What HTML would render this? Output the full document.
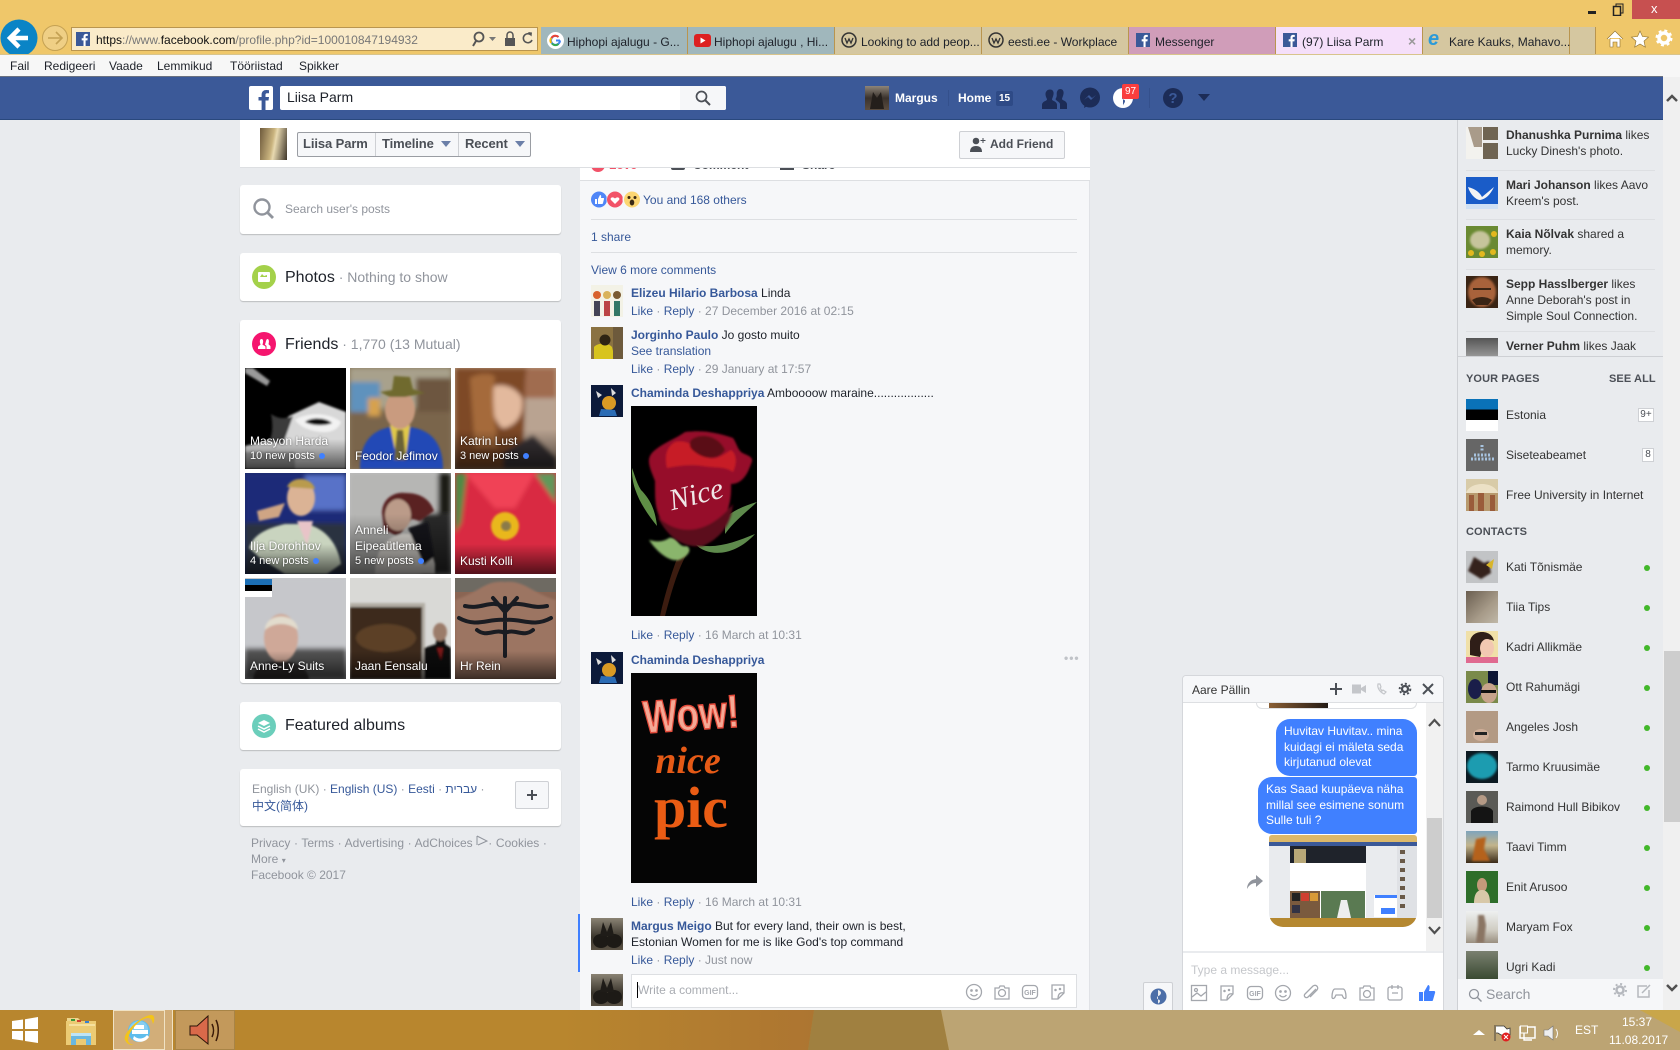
<!DOCTYPE html>
<html lang="et"><head><meta charset="utf-8"><title>Liisa Parm</title>
<style>
html,body{margin:0;padding:0;width:1680px;height:1050px;overflow:hidden;background:#e9ebee;font-family:"Liberation Sans","Noto Sans CJK SC",sans-serif;font-size:12px;color:#1d2129}
div,svg,span.b{box-sizing:border-box}
.a{position:absolute}
.t{position:absolute;white-space:nowrap;line-height:16px}
.l{color:#365899}.m{color:#90949c}
.n{font-weight:bold;color:#365899}
.card{position:absolute;left:240px;width:321px;background:#fff;border-radius:3px;box-shadow:0 1px 1px rgba(0,0,0,.2)}
.tab{position:absolute;top:27px;height:27px;border-right:1px solid #b9954f}
.tile{position:absolute;width:101px;height:101px;overflow:hidden;background:#333}
.tile svg{position:absolute;left:0;top:0}
.shade{position:absolute;left:0;right:0;bottom:0;height:48px;background:linear-gradient(transparent,rgba(0,0,0,.62))}
.cap{position:absolute;color:#fff;white-space:nowrap;line-height:16px;text-shadow:0 0 2px rgba(0,0,0,.6)}
.dot{display:inline-block;width:6px;height:6px;border-radius:50%;background:#4080ff;margin-left:4px}
.av{position:absolute;width:32px;height:32px}
.on{position:absolute;left:1644px;width:6px;height:6px;border-radius:50%;background:#42b72a}
.sep{position:absolute;height:1px;background:#dddfe2}
.ic{position:absolute;fill:none;stroke:#a4a7ad;stroke-width:1.3}
.bub{position:absolute;background:#4080ff;color:#fff}
</style></head><body>
<svg width="0" height="0" style="position:absolute"><defs><filter id="b1"><feGaussianBlur stdDeviation="1"/></filter><filter id="b2"><feGaussianBlur stdDeviation="2.5"/></filter><linearGradient id="tg" x1="0" x2="1" y1="0" y2="0"><stop offset="0" stop-color="#b8862e"/><stop offset="1" stop-color="#ad7531"/></linearGradient></defs></svg>

<!-- browser chrome -->
<div class="a" style="left:0;top:0;width:1680px;height:54px;background:#efc76a"></div>
<div class="a" style="left:1632px;top:0;width:48px;height:19px;background:#c75050"></div>
<div class="t" style="left:1651px;top:1px;color:#fff;font-size:13px">x</div>
<div class="a" style="left:1588px;top:11px;width:8px;height:3px;background:#222"></div>
<svg class="a" style="left:1612px;top:3px" width="13" height="13"><rect x="1.5" y="3.5" width="7" height="9" fill="none" stroke="#222" stroke-width="1.5"/><path d="M4 3V1h7v9H9" fill="none" stroke="#222"/></svg>
<svg class="a" style="left:0;top:17px" width="70" height="40"><circle cx="19" cy="21" r="18.5" fill="#0a84c6"/><path d="M28 21H11M19 12l-9 9 9 9" fill="none" stroke="#fff" stroke-width="4.5"/><circle cx="55" cy="21" r="12.5" fill="#efcf85" stroke="#c4a153"/><path d="M48 21h13M56 15l6 6-6 6" fill="none" stroke="#c4a153" stroke-width="1.6"/></svg>
<div class="a" style="left:71px;top:27px;width:467px;height:24px;background:#faebc9;border:1px solid #b9954f"></div>
<svg class="a" style="left:76px;top:32px" width="14" height="14"><rect width="14" height="14" fill="#3b5998"/><path d="M9.6 14V8.4h1.8l.3-2.2H9.6V4.900c0-.6.2-1 1.100-1h1.100V2c-.5-.1-1-.1-1.600-.1-1.600 0-2.700 1-2.700 2.800v1.500H5.700v2.200h1.800V14z" fill="#fff"/></svg>
<div class="t" style="left:96px;top:32px;font-size:12px;color:#777"><span style="color:#111">https</span>://www.<span style="color:#111">facebook.com</span>/profile.php?id=100010847194932</div>
<svg class="a" style="left:470px;top:29px" width="66" height="20"><circle cx="9" cy="8" r="4.500" fill="none" stroke="#555" stroke-width="1.800"/><path d="M6 12l-3 5" stroke="#555" stroke-width="2"/><path d="M19 8h7l-3.500 4z" fill="#777"/><rect x="35" y="9" width="10" height="8" fill="#555"/><path d="M37 9V6a3 3 0 0 1 6 0v3" fill="none" stroke="#555" stroke-width="1.500"/><path d="M61 6a4.500 4.500 0 1 0 1 5" fill="none" stroke="#555" stroke-width="1.600"/><path d="M58 3l4 .5-.5 4z" fill="#555"/></svg>

<div class="tab" style="left:541px;width:147px;background:#a0b7bc"><svg class="a" style="left:6px;top:5px" width="17" height="17"><circle cx="8.500" cy="8.500" r="8.500" fill="#fff"/><path d="M13 8.500A4.500 4.500 0 1 1 11.500 5" fill="none" stroke="#4285f4" stroke-width="2"/><path d="M4.500 6a4.500 4.500 0 0 1 7-1" fill="none" stroke="#ea4335" stroke-width="2"/><path d="M4.200 11a4.500 4.500 0 0 1 0-5" fill="none" stroke="#fbbc05" stroke-width="2"/><path d="M5 11.500a4.500 4.500 0 0 0 6.500.5" fill="none" stroke="#34a853" stroke-width="2"/><path d="M9 8.500h4" stroke="#4285f4" stroke-width="2"/></svg><div class="t" style="left:26px;top:7px">Hiphopi ajalugu - G...</div></div>
<div class="tab" style="left:688px;width:147px;background:#a0b7bc"><svg class="a" style="left:6px;top:7px" width="17" height="13"><rect width="17" height="13" rx="3" fill="#dd2020"/><path d="M6.500 3.500l5 3-5 3z" fill="#fff"/></svg><div class="t" style="left:26px;top:7px">Hiphopi ajalugu , Hi...</div></div>
<div class="tab" style="left:835px;width:147px;background:#d5c7a0"><svg class="a" style="left:6px;top:5px" width="16" height="16"><circle cx="8" cy="8" r="7" fill="none" stroke="#333" stroke-width="1.500"/><path d="M4 6l2 5 2-4 2 4 2-5" fill="none" stroke="#333" stroke-width="1.300"/></svg><div class="t" style="left:26px;top:7px">Looking to add peop...</div></div>
<div class="tab" style="left:982px;width:147px;background:#d5c7a0"><svg class="a" style="left:6px;top:5px" width="16" height="16"><circle cx="8" cy="8" r="7" fill="none" stroke="#333" stroke-width="1.500"/><path d="M4 6l2 5 2-4 2 4 2-5" fill="none" stroke="#333" stroke-width="1.300"/></svg><div class="t" style="left:26px;top:7px">eesti.ee - Workplace</div></div>
<div class="tab" style="left:1129px;width:147px;background:#d09db9"><svg class="a" style="left:7px;top:6px" width="14" height="14"><rect width="14" height="14" fill="#3b5998"/><path d="M9.600 14V8.400h1.800l.3-2.200H9.600V4.900c0-.6.2-1 1.100-1h1.100V2c-.5-.1-1-.1-1.600-.1-1.600 0-2.700 1-2.700 2.800v1.500H5.700v2.200h1.800V14z" fill="#fff"/></svg><div class="t" style="left:26px;top:7px">Messenger</div></div>
<div class="tab" style="left:1276px;width:147px;background:#f5dffa"><svg class="a" style="left:7px;top:6px" width="14" height="14"><rect width="14" height="14" fill="#3b5998"/><path d="M9.600 14V8.400h1.800l.3-2.200H9.600V4.900c0-.6.2-1 1.100-1h1.100V2c-.5-.1-1-.1-1.600-.1-1.600 0-2.700 1-2.700 2.800v1.500H5.700v2.200h1.800V14z" fill="#fff"/></svg><div class="t" style="left:26px;top:7px">(97) Liisa Parm</div><div class="t" style="left:132px;top:6px;color:#999;font-weight:bold;font-size:14px">×</div></div>
<div class="tab" style="left:1423px;width:147px;background:#d5c7a0"><div class="t" style="left:5px;top:4px;font-size:20px;color:#2b9ad8;font-weight:bold;font-style:italic">e</div><div class="t" style="left:26px;top:7px">Kare Kauks, Mahavo...</div></div>
<div class="tab" style="left:1570px;width:26px;background:#d5c7a0"></div>
<svg class="a" style="left:1605px;top:28px" width="72" height="22"><path d="M2 11l8-8 8 8M5 10v9h3v-5h4v5h3v-9" fill="#fff" stroke="#8a6d2d" stroke-width=".6"/><path d="M35 3l2.500 5.500 6 .6-4.500 4 1.300 6L35 16l-5.300 3.100 1.300-6-4.500-4 6-.6z" fill="#fff" stroke="#8a6d2d" stroke-width=".6"/><circle cx="59" cy="10" r="5" fill="none" stroke="#fff" stroke-width="3.500"/><circle cx="59" cy="10" r="7.500" fill="none" stroke="#fff" stroke-width="2" stroke-dasharray="3 2.900"/></svg>

<div class="a" style="left:0;top:54px;width:1680px;height:23px;background:#f7f7f7;border-top:1px solid #d8c48c"></div>
<div class="t" style="left:10px;top:58px">Fail</div><div class="t" style="left:44px;top:58px">Redigeeri</div><div class="t" style="left:109px;top:58px">Vaade</div><div class="t" style="left:157px;top:58px">Lemmikud</div><div class="t" style="left:230px;top:58px">Tööriistad</div><div class="t" style="left:299px;top:58px">Spikker</div>

<!-- scrollbar -->
<div class="a" style="left:1663px;top:77px;width:17px;height:933px;background:#f0f0f0"></div>
<div class="a" style="left:1664px;top:651px;width:16px;height:171px;background:#cdcdcd"></div>
<svg class="a" style="left:1664px;top:92px" width="16" height="12"><path d="M3 9l5-5 5 5" fill="none" stroke="#505050" stroke-width="2.500"/></svg>
<svg class="a" style="left:1664px;top:982px" width="16" height="12"><path d="M3 3l5 5 5-5" fill="none" stroke="#505050" stroke-width="2.500"/></svg>

<!-- FB top bar -->
<div class="a" style="left:0;top:76px;width:1663px;height:44px;background:#3b5998;border-top:1px solid #6b7280;border-bottom:1px solid #29487d"></div>
<svg class="a" style="left:249px;top:86px" width="24" height="24"><rect width="24" height="24" rx="2" fill="#fff"/><path d="M16.500 24v-9.500h3l.5-3.500h-3.500V9c0-1 .3-1.700 1.800-1.700H20V4.200c-.4 0-1.500-.2-2.800-.2-2.700 0-4.600 1.700-4.600 4.700V11H9.500v3.500h3.100V24z" fill="#3b5998"/></svg>
<div class="a" style="left:280px;top:86px;width:446px;height:24px;background:#fff;border-radius:2px 2px 2px 2px"></div>
<div class="a" style="left:680px;top:86px;width:46px;height:24px;background:#f6f7f9;border-radius:0 2px 2px 0"></div>
<svg class="a" style="left:695px;top:90px" width="16" height="16"><circle cx="6.500" cy="6.500" r="5" fill="none" stroke="#4b4f56" stroke-width="1.700"/><path d="M10 10l5 5" stroke="#4b4f56" stroke-width="2"/></svg>
<div class="t" style="left:287px;top:89px;font-size:14px;color:#1d2129">Liisa Parm</div>
<div class="a" style="left:865px;top:86px;width:24px;height:24px;background:linear-gradient(#8d8478,#3a322c 50%,#5b4d40)"><svg width="24" height="24"><path d="M5 23l3-17 4 6 4-6 3 17z" fill="#241f1b"/></svg></div>
<div class="t" style="left:895px;top:90px;color:#fff;font-weight:bold">Margus</div>
<div class="a" style="left:948px;top:90px;width:1px;height:16px;background:#34508c"></div>
<div class="t" style="left:958px;top:90px;color:#fff;font-weight:bold">Home</div>
<div class="a" style="left:996px;top:91px;width:17px;height:15px;background:#2e4a86;border-radius:2px;color:#fff;font-size:10px;font-weight:bold;text-align:center;line-height:15px">15</div>
<svg class="a" style="left:1042px;top:86px" width="26" height="24"><path d="M8 3.500c3 0 4 2.500 3.500 5s-1.500 4-1.500 5c0 1.500 4.500 1.500 5 5V23H0v-4.500c.5-3.500 5-3.500 5-5 0-1-1.300-2.500-1.500-5C3.300 6 5 3.500 8 3.500z" fill="#1c2c57"/><path d="M18 3c3 0 4 2.500 3.500 5s-1.500 4-1.500 5c0 1.500 4.500 1.500 5 5V23h-7v-5c-.5-2.500-4-3-4.500-5 1-1.500 1.500-3 1.200-5 0-2.500 1-5 3.800-5z" fill="#1c2c57"/></svg>
<svg class="a" style="left:1079px;top:87px" width="22" height="22"><circle cx="11" cy="10.500" r="10" fill="#1c2c57"/><path d="M5 21l1-5 4 2z" fill="#1c2c57"/><path d="M5 13l5-5 3 3 4-3-5 5-3-3z" fill="#3b5998"/></svg>
<svg class="a" style="left:1112px;top:87px" width="22" height="22"><circle cx="11" cy="11" r="10" fill="#fff"/><path d="M11 3c3 1 4 3 2 5-1 1-3 1-3 3s3 1 3 3-2 3-2 5z" fill="#3b5998"/></svg>
<div class="a" style="left:1122px;top:84px;width:17px;height:15px;background:#fa3e3e;border-radius:2px;color:#fff;font-size:10px;text-align:center;line-height:15px">97</div>
<div class="a" style="left:1149px;top:88px;width:1px;height:20px;background:#34508c"></div>
<svg class="a" style="left:1162px;top:87px" width="22" height="22"><circle cx="11" cy="11" r="10" fill="#1c2c57"/><text x="11" y="16" font-family="Liberation Sans" font-size="15" font-weight="bold" fill="#3b5998" text-anchor="middle">?</text></svg>
<svg class="a" style="left:1198px;top:93px" width="12" height="9"><path d="M0 1h12L6 8z" fill="#1c2c57"/></svg>

<!-- sticky profile header -->
<div class="a" style="left:240px;top:120px;width:850px;height:48px;background:#fff;border-bottom:1px solid #dddfe2"></div>
<div class="a" style="left:260px;top:128px;width:27px;height:32px;background:linear-gradient(100deg,#6e5a3c,#c9b37e 45%,#e8d9b0 55%,#3d3428)"></div>
<div class="a" style="left:297px;top:132px;width:234px;height:25px;background:#f6f7f9;border:1px solid #9a9da3;border-radius:2px"></div>
<div class="a" style="left:375px;top:133px;width:1px;height:23px;background:#ced0d4"></div>
<div class="a" style="left:458px;top:133px;width:1px;height:23px;background:#ced0d4"></div>
<div class="t" style="left:303px;top:136px;font-size:13px;font-weight:bold;color:#4b4f56;letter-spacing:-.1px">Liisa Parm</div>
<div class="t" style="left:382px;top:136px;font-size:13px;font-weight:bold;color:#4b4f56;letter-spacing:-.1px">Timeline</div>
<div class="t" style="left:465px;top:136px;font-size:13px;font-weight:bold;color:#4b4f56;letter-spacing:-.1px">Recent</div>
<svg class="a" style="left:441px;top:141px" width="11" height="7"><path d="M0 0h10L5 6z" fill="#6b7fa8"/></svg>
<svg class="a" style="left:515px;top:141px" width="11" height="7"><path d="M0 0h10L5 6z" fill="#6b7fa8"/></svg>
<div class="a" style="left:959px;top:131px;width:106px;height:28px;background:#f6f7f9;border:1px solid #ced0d4;border-radius:2px"></div>
<svg class="a" style="left:970px;top:137px" width="16" height="15"><circle cx="6" cy="4" r="3.300" fill="#4b4f56"/><path d="M0 15c0-4 2-6 6-6s6 2 6 6z" fill="#4b4f56"/><path d="M13 1v5M10.500 3.500h5" stroke="#4b4f56"/></svg>
<div class="t" style="left:990px;top:136px;font-weight:bold;color:#4b4f56">Add Friend</div>

<!-- left column -->
<div class="card" style="top:185px;height:49px"></div>
<svg class="a" style="left:253px;top:198px" width="22" height="22"><circle cx="9" cy="9" r="7.500" fill="none" stroke="#90949c" stroke-width="2.400"/><path d="M14 14l6 6" stroke="#90949c" stroke-width="2.800"/></svg>
<div class="t m" style="left:285px;top:201px">Search user's posts</div>
<div class="card" style="top:253px;height:48px"></div>
<svg class="a" style="left:252px;top:265px" width="24" height="24"><circle cx="12" cy="12" r="12" fill="#a4d14a"/><rect x="6" y="7" width="12" height="10" rx="1" fill="#fff"/><path d="M8 12l2-3 2 2 3-1v2" fill="#a4d14a"/></svg>
<div class="t" style="left:285px;top:269px;font-size:16px;color:#1d2129">Photos<span class="m" style="font-size:14px"> · Nothing to show</span></div>
<div class="card" style="top:320px;height:363px"></div>
<svg class="a" style="left:252px;top:332px" width="24" height="24"><circle cx="12" cy="12" r="12" fill="#f5156e"/><path d="M6 17v-2c.5-1.500 2-1.500 2.500-2.500C7.500 10 7.500 7 9.500 7s2 3 1 5.500c.5 1 3 1 3 2.500v2zM14.500 17v-3c-.5-.8-1.500-1-1.500-1.500 1-2.500 1-5.500 2.500-5.500s1.800 3 1 5c.3 1 1.500 1 2 2.500V17z" fill="#fff"/></svg>
<div class="t" style="left:285px;top:336px;font-size:16px;color:#1d2129">Friends<span class="m" style="font-size:14px"> · 1,770 (13 Mutual)</span></div>

<div class="tile" style="left:245px;top:368px;background:#000"><svg width="101" height="101"><g filter="url(#b1)"><path d="M0 101V78l26-6 18-24 30-14 27 10v57z" fill="#d8d8d8"/><path d="M50 52c12-8 34-8 46 2-2 6-8 10-16 10-12 0-24-4-30-12z" fill="#f2f2f2"/><path d="M60 54c6-5 20-5 27 1-6 3-20 3-27-1z" fill="#0c0c0c"/><path d="M0 5l22 13 3-5L8 0H0z" fill="#9a9a9a"/><path d="M26 46c6 4 12 6 22 2L38 76 24 74c4-8 4-18 2-28z" fill="#3a3a3a"/><path d="M0 84h50v17H0z" fill="#a5a5a5"/></g></svg><div class="shade" style="height:30px"></div></div>
<div class="tile" style="left:350px;top:368px;background:#8a7a5e"><svg width="101" height="101"><g filter="url(#b2)"><rect width="101" height="40" fill="#a8a18c"/><rect x="0" y="14" width="30" height="30" fill="#5f92bd"/><rect x="66" y="10" width="35" height="40" fill="#6d5740"/><rect x="0" y="44" width="101" height="57" fill="#7a654c"/><rect x="18" y="30" width="12" height="18" fill="#d6a14d"/></g><g filter="url(#b1)"><path d="M10 101c0-25 10-38 30-42h20c22 3 33 17 33 42z" fill="#2048b6"/><path d="M40 57h20l-4 30H46z" fill="#e0c84a"/><path d="M47 62h6l3 30H44z" fill="#6b6238"/><ellipse cx="50" cy="42" rx="15" ry="19" fill="#c99b7f"/><path d="M30 24l12-2 2-14 16 1 3 12 12 4-20 4H40z" fill="#6f6a2d"/></g></svg></div>
<div class="tile" style="left:455px;top:368px;background:#bba18a"><svg width="101" height="101"><g filter="url(#b2)"><rect x="60" width="41" height="40" fill="#a06c4f"/><rect x="70" y="30" width="31" height="70" fill="#b9a391"/><path d="M0 0h72c-5 20 2 70-10 101H0z" fill="#7e4a28"/><path d="M35 20c10-6 25-2 32 10 3 20-10 30-20 30-8-8-14-25-12-40z" fill="#e3b99d"/><path d="M15 10c10-6 25-5 25 0-5 25 3 55 2 70H20z" fill="#a56a3a"/><path d="M48 85l30-18 23 22v12H48z" fill="#3a3538"/></g></svg><div class="shade" style="height:40px"></div></div>
<div class="tile" style="left:245px;top:473px;background:#1c2c68"><svg width="101" height="101"><g filter="url(#b2)"><rect width="101" height="50" fill="#1a2a78"/><rect x="60" y="2" width="41" height="35" fill="#5872c8"/><rect y="50" width="101" height="51" fill="#2a3340"/></g><g filter="url(#b1)"><path d="M4 75c5-15 20-20 36-24h22c18 5 30 18 34 40l-14 10H40L15 85z" fill="#c9d4bf"/><ellipse cx="56" cy="25" rx="14" ry="18" fill="#dbb395"/><path d="M42 14c5-12 25-10 28 2z" fill="#b99b4e"/><path d="M52 48h16l-6 24z" fill="#e8c4c8"/><path d="M12 38l28-8-6 14-20 4z" fill="#cfa584"/></g></svg><div class="shade" style="height:30px"></div></div>
<div class="tile" style="left:350px;top:473px;background:#bdbdbd"><svg width="101" height="101"><g filter="url(#b2)"><rect width="101" height="101" fill="#b6b6b4"/><rect x="88" width="13" height="101" fill="#1c1a18"/><rect x="70" y="40" width="31" height="61" fill="#2c2a2a"/></g><g filter="url(#b1)"><path d="M32 40c0-14 12-22 24-20 14 0 24 6 28 18l-14 10-8-2-14 18-14-8z" fill="#5a2024"/><ellipse cx="48" cy="42" rx="13" ry="16" fill="#bb9b89"/><path d="M25 101c0-20 8-36 26-40 14-2 28 6 34 30v10z" fill="#e9e5df"/><path d="M58 55l20-6 6 35-10 8z" fill="#17151a"/></g></svg><div class="shade" style="height:60px"></div></div>
<div class="tile" style="left:455px;top:473px;background:#e2304a"><svg width="101" height="101"><g filter="url(#b2)"><rect width="101" height="101" fill="#d92a42"/><path d="M0 0h12L6 50 0 60z" fill="#4f8a45"/><path d="M80 0h21v30z" fill="#60985a"/><path d="M10 0h70L60 35H40z" fill="#f04356"/></g><circle cx="50" cy="53" r="14" fill="#e9b71a" filter="url(#b1)"/><circle cx="51" cy="53" r="5" fill="#8a7a4a" filter="url(#b1)"/></svg><div class="shade" style="height:30px"></div></div>
<div class="tile" style="left:245px;top:578px;background:#c8c8cc"><svg width="101" height="101"><g filter="url(#b2)"><rect width="101" height="101" fill="#c6c7cb"/><rect y="70" width="101" height="31" fill="#555"/></g><rect x="0" y="1" width="27" height="6" fill="#1c6fb5"/><rect x="0" y="7" width="27" height="6" fill="#000"/><rect x="0" y="13" width="27" height="6" fill="#fff"/><g filter="url(#b1)"><ellipse cx="36" cy="60" rx="17" ry="24" fill="#cfa898"/><path d="M20 52c0-18 32-18 33 0-10-8-24-8-33 0z" fill="#e2dccd"/><path d="M8 101c2-14 14-18 28-18s26 6 28 18z" fill="#2d2a2c"/></g></svg><div class="shade" style="height:28px"></div></div>
<div class="tile" style="left:350px;top:578px;background:#e2e2e0"><svg width="101" height="101"><rect width="101" height="101" fill="#d9d9d6"/><g filter="url(#b1)"><rect x="0" y="25" width="75" height="76" fill="#b2ada4"/><rect x="0" y="29" width="72" height="72" fill="#3d2c1f"/><ellipse cx="36" cy="60" rx="30" ry="14" fill="#5c4028"/><path d="M74 101V70l12-4V52h9v14l6 4v31z" fill="#111"/><ellipse cx="90" cy="54" rx="7" ry="9" fill="#9b7c6a"/><path d="M87 70h6l-2 12z" fill="#7c1818"/></g></svg><div class="shade" style="height:28px"></div></div>
<div class="tile" style="left:455px;top:578px;background:#8a6553"><svg width="101" height="101"><rect width="101" height="14" fill="#6e6a62"/><g filter="url(#b1)"><path d="M0 22C25 14 30 2 50 4c20-2 28 12 51 18v79H0z" fill="#9c7462"/></g><g fill="none" stroke="#1a1c22" stroke-width="4" stroke-linecap="round"><path d="M50 20v58M50 30C36 20 28 32 10 28M50 30c14-10 24 2 42-2M50 42C34 40 22 50 4 40M50 42c16-2 28 8 46-2M50 55C40 50 32 60 22 52M50 55c10-5 18 5 28-3M38 20l12 14 12-14"/></g></svg><div class="shade" style="height:28px"></div></div>

<div class="cap" style="left:250px;top:433px">Masyon Harda</div>
<div class="cap" style="left:250px;top:448px;font-size:11px">10 new posts<span class="dot"></span></div>
<div class="cap" style="left:355px;top:448px">Feodor Jefimov</div>
<div class="cap" style="left:460px;top:433px">Katrin Lust</div>
<div class="cap" style="left:460px;top:448px;font-size:11px">3 new posts<span class="dot"></span></div>
<div class="cap" style="left:250px;top:538px">Ilja Dorohhov</div>
<div class="cap" style="left:250px;top:553px;font-size:11px">4 new posts<span class="dot"></span></div>
<div class="cap" style="left:355px;top:522px">Anneli</div>
<div class="cap" style="left:355px;top:538px">Eipeaütlema</div>
<div class="cap" style="left:355px;top:553px;font-size:11px">5 new posts<span class="dot"></span></div>
<div class="cap" style="left:460px;top:553px">Kusti Kolli</div>
<div class="cap" style="left:250px;top:658px">Anne-Ly Suits</div>
<div class="cap" style="left:355px;top:658px">Jaan Eensalu</div>
<div class="cap" style="left:460px;top:658px">Hr Rein</div>

<div class="card" style="top:702px;height:48px"></div>
<svg class="a" style="left:252px;top:714px" width="24" height="24"><circle cx="12" cy="12" r="12" fill="#6bcebb"/><path d="M12 6l6 3-6 3-6-3z" fill="#fff"/><path d="M6 12l6 3 6-3M6 15l6 3 6-3" fill="none" stroke="#fff" stroke-width="1.500"/></svg>
<div class="t" style="left:285px;top:718px;font-size:16px;color:#1d2129">Featured albums</div>
<div class="card" style="top:769px;height:57px"></div>
<div class="t m" style="left:252px;top:781px">English (UK) · <span class="l">English (US)</span> · <span class="l">Eesti</span> · <span class="l">עברית</span> ·</div>
<div class="t l" style="left:252px;top:798px">中文(简体)</div>
<div class="a" style="left:515px;top:781px;width:34px;height:28px;background:#f6f7f9;border:1px solid #ced0d4;border-radius:2px"></div>
<svg class="a" style="left:526px;top:789px" width="12" height="12"><path d="M6 1v10M1 6h10" stroke="#4b4f56" stroke-width="2"/></svg>
<div class="t m" style="left:251px;top:835px;word-spacing:.3px">Privacy · Terms · Advertising · AdChoices <svg width="12" height="12" style="vertical-align:0"><path d="M1 1v9M1 1l10 5-9 4" fill="none" stroke="#90949c"/></svg>· Cookies ·</div>
<div class="t m" style="left:251px;top:851px">More <span style="font-size:8px">▾</span></div>
<div class="t m" style="left:251px;top:867px">Facebook © 2017</div>

<!-- center column -->
<div class="a" style="left:580px;top:168px;width:510px;height:13px;background:#fff;border-bottom:1px solid #dddfe2;overflow:hidden">
<div class="a" style="left:11px;top:-10px;width:14px;height:14px;background:#f25268;border-radius:50%"></div>
<div class="t" style="left:29px;top:-11px;color:#f25268;font-weight:bold">Love</div>
<div class="a" style="left:91px;top:-10px;width:14px;height:12px;background:#4b4f56;border-radius:2px"></div>
<div class="t" style="left:113px;top:-11px;color:#4b4f56;font-weight:bold">Comment</div>
<div class="a" style="left:200px;top:-10px;width:14px;height:12px;background:#4b4f56"></div>
<div class="t" style="left:222px;top:-11px;color:#4b4f56;font-weight:bold">Share</div>
</div>
<div class="a" style="left:580px;top:181px;width:510px;height:829px;background:#f6f7f9;border-right:1px solid #e0e2e6"></div>
<svg class="a" style="left:591px;top:191px" width="49" height="17"><circle cx="8" cy="8.500" r="8" fill="#4f86f7"/><path d="M4 8h2v5H4zM7 8l2-4c1 0 1.500 1 1 3h2.500c.5 0 .7.500.5 1l-1 4c0 .5-.5 1-1 1H7z" fill="#fff"/><circle cx="24" cy="8.500" r="8.500" fill="#f6f7f9"/><circle cx="24" cy="8.500" r="8" fill="#f25268"/><path d="M24 13l-4-4c-1.500-2 1.500-4 4-1.500 2.500-2.500 5.500-.5 4 1.500z" fill="#fff"/><circle cx="40" cy="8.500" r="8.500" fill="#f6f7f9"/><circle cx="41" cy="8.500" r="8" fill="#fcd672"/><ellipse cx="41" cy="11.500" rx="2.300" ry="3" fill="#3a2a14"/><circle cx="38" cy="6.500" r="1.500" fill="#3a2a14"/><circle cx="44" cy="6.500" r="1.500" fill="#3a2a14"/></svg>
<div class="t l" style="left:643px;top:192px">You and 168 others</div>
<div class="sep" style="left:591px;top:219px;width:486px"></div>
<div class="t l" style="left:591px;top:229px">1 share</div>
<div class="sep" style="left:591px;top:252px;width:486px"></div>
<div class="t l" style="left:591px;top:262px">View 6 more comments</div>

<div class="av" style="left:591px;top:285px;background:#f3f2e6"><svg width="32" height="32"><circle cx="6" cy="10" r="4" fill="#d8622d"/><circle cx="16" cy="10" r="4" fill="#d9b35a"/><circle cx="26" cy="10" r="4" fill="#7a5a32"/><rect x="3" y="16" width="6" height="15" fill="#445"/><rect x="13" y="16" width="6" height="15" fill="#b44"/><rect x="23" y="16" width="6" height="15" fill="#376"/></svg></div>
<div class="t" style="left:631px;top:285px"><span class="n">Elizeu Hilario Barbosa</span> Linda</div>
<div class="t m" style="left:631px;top:303px"><span class="l">Like</span> · <span class="l">Reply</span> · 27 December 2016 at 02:15</div>
<div class="av" style="left:591px;top:327px;background:#8a7242"><svg width="32" height="32"><path d="M3 32V20c3-4 14-5 18 0l3 12z" fill="#d8c41e"/><circle cx="14" cy="13" r="5.500" fill="#2e2413"/><rect x="22" width="10" height="32" fill="#6d5a3c"/></svg></div>
<div class="t" style="left:631px;top:327px"><span class="n">Jorginho Paulo</span> Jo gosto muito</div>
<div class="t l" style="left:631px;top:343px">See translation</div>
<div class="t m" style="left:631px;top:361px"><span class="l">Like</span> · <span class="l">Reply</span> · 29 January at 17:57</div>
<div class="av" style="left:591px;top:385px;background:#0c1a3a"><svg width="32" height="32"><circle cx="18" cy="18" r="7" fill="#d99a24"/><path d="M10 24l14 1 2 6H8z" fill="#2b6cb5"/><path d="M5 6l6 4-4 3zM20 3l5 5-4 3z" fill="#ddd"/></svg></div>
<div class="t" style="left:631px;top:385px"><span class="n">Chaminda Deshappriya</span> Amboooow maraine..................</div>
<svg class="a" style="left:631px;top:406px" width="126" height="210"><rect width="126" height="210" fill="#000"/>
<path d="M50 142c-8 20-16 45-21 68h5c6-22 12-46 24-66z" fill="#3c1c10"/>
<path d="M1 62C0 85 14 105 26 120c-2-18-8-28-16-36-4-6-6-14-9-22z" fill="#5f8f46"/>
<path d="M18 134c8 12 20 22 30 20 8-3 14-10 8-14-10 2-8-10-18-8-6 4-12 4-20 2z" fill="#8ab56c" filter="url(#b1)"/>
<path d="M64 138c14 14 40 12 60-10-20 8-40 16-60 10zM94 128c10-14 24-24 32-32-14 4-26 10-32 16z" fill="#5e8a4c"/>
<g filter="url(#b1)"><path d="M24 75C18 60 14 52 24 44c10-8 22-12 30-18 18-2 30 0 48 6 4 6 4 10 8 14 6 4 14 4 10 12-4 12-10 20-20 20 1 22-6 44-30 56-16 2-34-6-42-24-4-10-4-18-4-36z" fill="#96102a"/>
<path d="M36 62c-2-10-2-20 8-26 18-4 22 12 34 16 8 2 16-4 22-8 6 4 6 14 2 22-8-6-18-4-30-6-14-2-24 0-36 2z" fill="#c71a28"/>
<path d="M60 34c10-8 28-4 34 10-6 10-20 10-30 2-6-4-6-8-4-12z" fill="#5a0812"/>
<path d="M26 110c20 20 50 20 76-12-2 20-12 34-30 42-18 2-34-6-46-30z" fill="#5c0a1c"/></g>
<text x="65" y="98" font-family="Liberation Serif" font-style="italic" font-size="30" fill="#efe6e6" text-anchor="middle" transform="rotate(-14 65 88)">Nice</text></svg>
<div class="t m" style="left:631px;top:627px"><span class="l">Like</span> · <span class="l">Reply</span> · 16 March at 10:31</div>

<div class="av" style="left:591px;top:652px;background:#0c1a3a"><svg width="32" height="32"><circle cx="18" cy="18" r="7" fill="#d99a24"/><path d="M10 24l14 1 2 6H8z" fill="#2b6cb5"/><path d="M5 6l6 4-4 3zM20 3l5 5-4 3z" fill="#ddd"/></svg></div>
<div class="t n" style="left:631px;top:652px">Chaminda Deshappriya</div>
<div class="t m" style="left:1064px;top:650px;font-weight:bold;letter-spacing:1px;color:#c0c3c8">•••</div>
<svg class="a" style="left:631px;top:673px" width="126" height="210"><rect width="126" height="210" fill="#050505"/><text x="60" y="57" font-family="Liberation Sans" font-weight="bold" font-size="46" fill="#f5a995" stroke="#e34a3a" stroke-width="1.500" text-anchor="middle" textLength="96" lengthAdjust="spacingAndGlyphs" transform="rotate(-4 60 40)">Wow!</text><text x="57" y="100" font-family="Liberation Serif" font-weight="bold" font-style="italic" font-size="38" fill="#e65a16" text-anchor="middle">nice</text><text x="60" y="154" font-family="Liberation Serif" font-weight="bold" font-size="58" fill="#ea5c14" text-anchor="middle">pic</text></svg>
<div class="t m" style="left:631px;top:894px"><span class="l">Like</span> · <span class="l">Reply</span> · 16 March at 10:31</div>
<div class="a" style="left:578px;top:914px;width:2px;height:58px;background:#4080ff"></div>
<div class="av" style="left:591px;top:918px;background:linear-gradient(#8a8374,#3a352c 60%,#5a5144)"><svg width="32" height="32"><ellipse cx="10" cy="23" rx="8" ry="7" fill="#1d1a16"/><ellipse cx="23" cy="23" rx="8" ry="7" fill="#1d1a16"/><path d="M12 4l4 10 4-10 3 14H9z" fill="#1f1c18"/></svg></div>
<div class="t" style="left:631px;top:918px"><span class="n">Margus Meigo</span> But for every land, their own is best,</div>
<div class="t" style="left:631px;top:934px">Estonian Women for me is like God's top command</div>
<div class="t m" style="left:631px;top:952px"><span class="l">Like</span> · <span class="l">Reply</span> · Just now</div>
<div class="av" style="left:591px;top:974px;background:linear-gradient(#8a8374,#3a352c 60%,#5a5144)"><svg width="32" height="32"><ellipse cx="10" cy="23" rx="8" ry="7" fill="#1d1a16"/><ellipse cx="23" cy="23" rx="8" ry="7" fill="#1d1a16"/><path d="M12 4l4 10 4-10 3 14H9z" fill="#1f1c18"/></svg></div>
<div class="a" style="left:631px;top:974px;width:446px;height:34px;background:#fff;border:1px solid #dddfe2"></div>
<div class="a" style="left:637px;top:982px;width:1px;height:16px;background:#000"></div>
<div class="t" style="left:638px;top:982px;color:#a9acb2">Write a comment...</div>
<svg class="ic" style="left:965px;top:983px" width="18" height="18"><circle cx="9" cy="9" r="7.500"/><circle cx="6.500" cy="7.500" r=".7"/><circle cx="11.500" cy="7.500" r=".7"/><path d="M5.500 11c2 2.500 5 2.500 7 0"/></svg>
<svg class="ic" style="left:993px;top:983px" width="18" height="18"><path d="M2 5h4l1-2h4l1 2h4v11H2z"/><circle cx="9" cy="10" r="3.500"/></svg>
<svg class="ic" style="left:1021px;top:983px" width="18" height="18"><rect x="1.500" y="2.500" width="15" height="13" rx="3.500"/><text x="9" y="12" font-family="Liberation Sans" font-size="7" font-weight="bold" fill="#a4a7ad" stroke="none" text-anchor="middle">GIF</text></svg>
<svg class="ic" style="left:1049px;top:983px" width="18" height="18"><path d="M3 2h12v8l-6 6H3z"/><path d="M15 10c-4-1-6 1-6 6"/><circle cx="6.500" cy="7" r=".6"/><circle cx="11" cy="6" r=".6"/></svg>

<!-- right sidebar -->
<div class="a" style="left:1457px;top:120px;width:206px;height:890px;background:#e9ebee;border-left:1px solid #ced0d4"></div>

<div class="av" style="left:1466px;top:127px"><svg width="32" height="32"><rect width="32" height="32" fill="#f3f2ee"/><rect x="17" width="15" height="32" fill="#6f6452"/><rect x="17" y="13" width="15" height="3" fill="#eee"/><path d="M2 0h14v20H8z" fill="#a99b8a"/></svg></div>
<div class="t" style="left:1506px;top:127px;color:#333"><b>Dhanushka Purnima</b> likes</div>
<div class="t" style="left:1506px;top:143px;color:#333">Lucky Dinesh's photo.</div>
<div class="sep" style="left:1466px;top:170px;width:189px"></div>
<div class="av" style="left:1466px;top:177px;background:#1a5cc8"><svg width="32" height="32"><path d="M2 10c8 2 12 6 14 10l12-10c-4 8-8 12-14 13-4 0-10-6-12-13z" fill="#f4f4f4"/><path d="M0 27h32v5H0z" fill="#cfe0f4"/></svg></div>
<div class="t" style="left:1506px;top:177px;color:#333"><b>Mari Johanson</b> likes Aavo</div>
<div class="t" style="left:1506px;top:193px;color:#333">Kreem's post.</div>
<div class="sep" style="left:1466px;top:219px;width:189px"></div>
<div class="av" style="left:1466px;top:226px;background:#6a8a32"><svg width="32" height="32"><ellipse cx="14" cy="14" rx="10" ry="9" fill="#c6c49c" filter="url(#b1)"/><circle cx="5" cy="27" r="3" fill="#e2b81e"/><circle cx="16" cy="28" r="3" fill="#e2b81e"/><circle cx="27" cy="26" r="3" fill="#e2b81e"/><circle cx="28" cy="8" r="3" fill="#e2b81e"/></svg></div>
<div class="t" style="left:1506px;top:226px;color:#333"><b>Kaia Nõlvak</b> shared a</div>
<div class="t" style="left:1506px;top:242px;color:#333">memory.</div>
<div class="sep" style="left:1466px;top:269px;width:189px"></div>
<div class="av" style="left:1466px;top:276px;background:#3a2414"><svg width="32" height="32"><ellipse cx="16" cy="16" rx="14" ry="15" fill="#a8623a" filter="url(#b1)"/><path d="M6 24c6-4 14-4 20 0l-4 5H10z" fill="#3a2414"/><rect x="7" y="12" width="18" height="2" fill="#3a2414"/></svg></div>
<div class="t" style="left:1506px;top:276px;color:#333"><b>Sepp Hasslberger</b> likes</div>
<div class="t" style="left:1506px;top:292px;color:#333">Anne Deborah's post in</div>
<div class="t" style="left:1506px;top:308px;color:#333">Simple Soul Connection.</div>
<div class="sep" style="left:1466px;top:331px;width:189px"></div>
<div class="av" style="left:1466px;top:338px;height:19px;background:linear-gradient(#555,#999)"></div>
<div class="t" style="left:1506px;top:338px;color:#333"><b>Verner Puhm</b> likes Jaak</div>
<div class="a" style="left:1458px;top:356px;width:205px;height:1px;background:#ced0d4"></div>

<div class="t" style="left:1466px;top:371px;font-size:11px;font-weight:bold;color:#4b4f56;letter-spacing:.1px">YOUR PAGES</div>
<div class="t" style="left:1609px;top:371px;font-size:11px;font-weight:bold;color:#4b4f56;letter-spacing:.1px">SEE ALL</div>
<div class="av" style="left:1466px;top:399px;background:linear-gradient(#0a72b8 33%,#000 33%,#000 66%,#fff 66%)"></div>
<div class="t" style="left:1506px;top:407px;color:#333">Estonia</div>
<div class="a" style="left:1638px;top:408px;width:16px;height:14px;background:#fff;border:1px solid #ced0d4;font-size:10px;line-height:12px;text-align:center;color:#4b4f56">9+</div>
<div class="av" style="left:1466px;top:439px;background:#666"><svg width="32" height="32"><path d="M5 20h23M8 16h17M16 6v6" stroke="#a8c4e0" stroke-width="3" stroke-dasharray="2 1.500"/></svg></div>
<div class="t" style="left:1506px;top:447px;color:#333">Siseteabeamet</div>
<div class="a" style="left:1642px;top:448px;width:12px;height:14px;background:#fff;border:1px solid #ced0d4;font-size:10px;line-height:12px;text-align:center;color:#4b4f56">8</div>
<div class="av" style="left:1466px;top:479px;background:#d8cba8"><svg width="32" height="32"><path d="M0 14h32v18H0z" fill="#b89a6e"/><path d="M3 16h5v16H3zM12 14h6v18h-6zM24 16h5v16h-5z" fill="#9a5c3a"/><path d="M0 14C4 2 28 2 32 14z" fill="#ece1c6"/></svg></div>
<div class="t" style="left:1506px;top:487px;color:#333">Free University in Internet</div>
<div class="t" style="left:1466px;top:524px;font-size:11px;font-weight:bold;color:#4b4f56;letter-spacing:.1px">CONTACTS</div>

<div class="av" style="left:1466px;top:551px;background:#c2c4c6"><svg width="32" height="32"><path d="M2 20l6-14 10 6 5-2 2 12-10 6z" fill="#35211c" filter="url(#b1)"/><path d="M20 14l8-6-2 10z" fill="#d8b52a"/></svg></div><div class="t" style="left:1506px;top:559px;color:#333">Kati Tõnismäe</div><div class="on" style="top:565px"></div>
<div class="av" style="left:1466px;top:591px;background:linear-gradient(135deg,#6a5e50,#a69a88 60%,#c0b8a8)"></div><div class="t" style="left:1506px;top:599px;color:#333">Tiia Tips</div><div class="on" style="top:605px"></div>
<div class="av" style="left:1466px;top:631px;background:#f0e0a8"><svg width="32" height="32"><path d="M4 24V10C6-2 26-2 28 10c-6-4-10 2-12 10l-2 6z" fill="#2f1e18"/><ellipse cx="21" cy="17" rx="7" ry="9" fill="#f2c8b2"/><rect y="26" width="32" height="6" fill="#e06a90"/></svg></div><div class="t" style="left:1506px;top:639px;color:#333">Kadri Allikmäe</div><div class="on" style="top:645px"></div>
<div class="av" style="left:1466px;top:671px;background:#7a8a4a"><svg width="32" height="32"><rect x="22" width="10" height="14" fill="#0c1434"/><ellipse cx="9" cy="18" rx="7" ry="10" fill="#1a1e4a"/><ellipse cx="23" cy="22" rx="8" ry="10" fill="#c8a48c"/><rect x="15" y="19" width="15" height="3" fill="#111"/></svg></div><div class="t" style="left:1506px;top:679px;color:#333">Ott Rahumägi</div><div class="on" style="top:685px"></div>
<div class="av" style="left:1466px;top:711px;background:#b39a84"><svg width="32" height="32"><ellipse cx="15" cy="24" rx="8" ry="6" fill="#cfae98"/><rect x="9" y="21" width="12" height="3" fill="#222"/></svg></div><div class="t" style="left:1506px;top:719px;color:#333">Angeles Josh</div><div class="on" style="top:725px"></div>
<div class="av" style="left:1466px;top:751px;background:#0c1a22"><svg width="32" height="32"><ellipse cx="16" cy="15" rx="15" ry="13" fill="#1f9cb0" filter="url(#b1)"/></svg></div><div class="t" style="left:1506px;top:759px;color:#333">Tarmo Kruusimäe</div><div class="on" style="top:765px"></div>
<div class="av" style="left:1466px;top:791px;background:#5a5a56"><svg width="32" height="32"><circle cx="16" cy="9" r="5" fill="#b59a86"/><path d="M5 32V20c3-6 19-6 22 0v12z" fill="#141414"/></svg></div><div class="t" style="left:1506px;top:799px;color:#333">Raimond Hull Bibikov</div><div class="on" style="top:805px"></div>
<div class="av" style="left:1466px;top:831px;background:linear-gradient(#7fa4bc,#c2b48c 45%,#3a2a18)"><svg width="32" height="32"><path d="M6 30l4-22 10-2-2 12 6 12z" fill="#b5621e" filter="url(#b1)"/></svg></div><div class="t" style="left:1506px;top:839px;color:#333">Taavi Timm</div><div class="on" style="top:845px"></div>
<div class="av" style="left:1466px;top:871px;background:#2e6e2a"><svg width="32" height="32"><ellipse cx="16" cy="14" rx="5" ry="7" fill="#c49a7a"/><path d="M8 32c0-10 4-13 8-13s8 3 8 13z" fill="#d8c8a8"/></svg></div><div class="t" style="left:1506px;top:879px;color:#333">Enit Arusoo</div><div class="on" style="top:885px"></div>
<div class="av" style="left:1466px;top:911px;background:linear-gradient(#eef0f0,#cfccc2 60%,#9a8f80)"><svg width="32" height="32"><path d="M12 4h6l2 10-2 18h-8l2-18z" fill="#8a7564" filter="url(#b1)"/></svg></div><div class="t" style="left:1506px;top:919px;color:#333">Maryam Fox</div><div class="on" style="top:925px"></div>
<div class="av" style="left:1466px;top:951px;height:28px;background:linear-gradient(#7a8070,#3a4a32)"></div><div class="t" style="left:1506px;top:959px;color:#333">Ugri Kadi</div><div class="on" style="top:965px"></div>
<div class="a" style="left:1458px;top:979px;width:205px;height:31px;background:#f6f7f9"></div>
<svg class="a" style="left:1468px;top:988px" width="14" height="14"><circle cx="6" cy="6" r="4.500" fill="none" stroke="#90949c" stroke-width="1.300"/><path d="M9.500 9.500l4 4" stroke="#90949c" stroke-width="1.500"/></svg>
<div class="t m" style="left:1486px;top:986px;font-size:14px">Search</div>
<svg class="a" style="left:1613px;top:983px" width="14" height="14"><circle cx="7" cy="7" r="3.500" fill="none" stroke="#b5b8be" stroke-width="2.500"/><circle cx="7" cy="7" r="6" fill="none" stroke="#b5b8be" stroke-width="2" stroke-dasharray="2 2.700"/></svg>
<svg class="a" style="left:1637px;top:984px" width="14" height="14"><path d="M10 2H1v11h11V6" fill="none" stroke="#b5b8be" stroke-width="1.500"/><path d="M5 9l8-8" stroke="#b5b8be" stroke-width="1.500"/></svg>

<!-- chat -->
<div class="a" style="left:1143px;top:982px;width:30px;height:28px;background:#f6f7f9;border:1px solid #ced0d4;border-bottom:none;border-radius:2px 2px 0 0"></div>
<svg class="a" style="left:1150px;top:988px" width="17" height="17"><circle cx="8.500" cy="8.500" r="8" fill="#4b6ea8"/><path d="M8 2c3 1 4 3 2 5-1 1-3 1-3 3s3 1 3 3-2 2-2 3" fill="#e9ebee"/></svg>
<div class="a" style="left:1183px;top:676px;width:260px;height:334px;background:#fff;box-shadow:0 0 0 1px #d5d7db;border-radius:3px 3px 0 0"></div>
<div class="a" style="left:1183px;top:676px;width:260px;height:27px;background:#f6f7f9;border-bottom:1px solid #dddfe2;border-radius:3px 3px 0 0"></div>
<div class="t" style="left:1192px;top:682px;color:#333">Aare Pällin</div>
<svg class="a" style="left:1328px;top:681px" width="110" height="16"><path d="M8 2v12M2 8h12" stroke="#4b4f56" stroke-width="2"/><rect x="24" y="3.500" width="9" height="9" fill="#c4c6ca"/><path d="M33 7l5-3v8l-5-3z" fill="#c4c6ca"/><path d="M50 3c-1 4 2 8 6 10l2-2-3-2-1 1-2-3 1-1-1-3z" fill="none" stroke="#c4c6ca" stroke-width="1.200"/><circle cx="77" cy="8" r="3" fill="none" stroke="#4b4f56" stroke-width="2.300"/><circle cx="77" cy="8" r="5.300" fill="none" stroke="#4b4f56" stroke-width="2" stroke-dasharray="2 2.100"/><path d="M95 3l10 10M105 3L95 13" stroke="#4b4f56" stroke-width="2"/></svg>

<div class="a" style="left:1256px;top:703px;width:161px;height:6px;border:1px solid #dddfe2;border-top:none;border-radius:0 0 12px 12px"></div>
<div class="a" style="left:1269px;top:703px;width:59px;height:5px;background:linear-gradient(90deg,#8a5f35,#231a14)"></div>
<div class="bub" style="left:1276px;top:719px;width:141px;height:57px;border-radius:14px 14px 3px 14px"></div>
<div class="t" style="left:1284px;top:723px;color:#fff">Huvitav Huvitav.. mina</div>
<div class="t" style="left:1284px;top:739px;color:#fff">kuidagi ei mäleta seda</div>
<div class="t" style="left:1284px;top:754px;color:#fff">kirjutanud olevat</div>
<div class="bub" style="left:1258px;top:777px;width:159px;height:57px;border-radius:14px 3px 3px 14px"></div>
<div class="t" style="left:1266px;top:781px;color:#fff">Kas Saad kuupäeva näha</div>
<div class="t" style="left:1266px;top:797px;color:#fff">millal see esimene sonum</div>
<div class="t" style="left:1266px;top:812px;color:#fff">Sulle tuli ?</div>
<svg class="a" style="left:1247px;top:875px" width="16" height="14"><path d="M9 0l7 6-7 6V8C5 8 2 10 0 14c0-6 4-9.500 9-10z" fill="#90949c"/></svg>
<div class="a" style="left:1269px;top:835px;width:148px;height:92px;border-radius:3px 3px 14px 14px;overflow:hidden;background:#e9ebee">
<svg width="148" height="92"><rect width="148" height="7" fill="#dcb86a"/><rect y="7" width="148" height="4" fill="#3b5998"/><rect x="21" y="11" width="76" height="17" fill="#1f232b"/><rect x="25" y="14" width="12" height="14" fill="#b8a878"/><rect x="21" y="28" width="76" height="55" fill="#fff"/><rect x="21" y="56" width="30" height="27" fill="#7a5a3e"/><rect x="23" y="58" width="8" height="8" fill="#222"/><rect x="32" y="58" width="8" height="8" fill="#d04030"/><rect x="41" y="58" width="8" height="8" fill="#d89a38"/><rect x="23" y="70" width="8" height="8" fill="#334"/><rect x="52" y="56" width="44" height="27" fill="#5a7a52"/><path d="M68 83l4-18h6l4 18z" fill="#eee"/><rect x="105" y="60" width="23" height="22" fill="#fff"/><rect x="106" y="60" width="22" height="3" fill="#4080ff"/><rect x="112" y="73" width="14" height="6" fill="#4080ff"/><rect x="128" y="11" width="20" height="72" fill="#dfe1e5"/><path d="M131 15h5v4h-5zM131 24h5v4h-5zM131 33h5v4h-5zM131 42h5v4h-5zM131 51h5v4h-5zM131 60h5v4h-5zM131 69h5v4h-5z" fill="#6a5a48"/><rect y="83" width="148" height="9" fill="#b58830"/></svg></div>
<div class="a" style="left:1426px;top:703px;width:17px;height:249px;background:#f1f1f1"></div>
<div class="a" style="left:1427px;top:818px;width:15px;height:100px;background:#cdcdcd"></div>
<svg class="a" style="left:1428px;top:717px" width="13" height="11"><path d="M1 9l5.500-6L12 9" fill="none" stroke="#505050" stroke-width="2.200"/></svg>
<svg class="a" style="left:1428px;top:925px" width="13" height="11"><path d="M1 2l5.500 6L12 2" fill="none" stroke="#505050" stroke-width="2.200"/></svg>
<div class="a" style="left:1183px;top:951px;width:260px;height:2px;background:#e9ebee"></div>
<div class="t" style="left:1191px;top:962px;color:#c5c7cb">Type a message...</div>
<svg class="ic" style="left:1190px;top:984px" width="18" height="18"><rect x="1.500" y="1.500" width="15" height="15"/><path d="M2 13l5-4 4 3 5-4"/><circle cx="6" cy="6" r="1.500"/></svg>
<svg class="ic" style="left:1218px;top:984px" width="18" height="18"><path d="M3 2h12v8l-6 6H3z"/><path d="M15 10c-4-1-6 1-6 6"/><circle cx="6.500" cy="7" r=".6"/><circle cx="11" cy="6" r=".6"/></svg>
<svg class="ic" style="left:1246px;top:984px" width="18" height="18"><rect x="1.500" y="2.500" width="15" height="13" rx="3.500"/><text x="9" y="12" font-family="Liberation Sans" font-size="7" font-weight="bold" fill="#a4a7ad" stroke="none" text-anchor="middle">GIF</text></svg>
<svg class="ic" style="left:1274px;top:984px" width="18" height="18"><circle cx="9" cy="9" r="7.500"/><circle cx="6.500" cy="7.500" r=".7"/><circle cx="11.500" cy="7.500" r=".7"/><path d="M5.500 11c2 2.500 5 2.500 7 0"/></svg>
<svg class="ic" style="left:1302px;top:984px" width="18" height="18"><path d="M14 5L6 13c-2 2-5-1-3-3l8-8c3-2 6 1 4 4l-7 7"/></svg>
<svg class="ic" style="left:1330px;top:984px" width="18" height="18"><path d="M5 5h8c2 0 3 4 3 8 0 2-2 2-3 0l-1-2H6l-1 2c-1 2-3 2-3 0 0-4 1-8 3-8z"/></svg>
<svg class="ic" style="left:1358px;top:984px" width="18" height="18"><path d="M2 4h3l1-2h6l1 2h3v12H2z"/><circle cx="9" cy="10" r="3.500"/></svg>
<svg class="ic" style="left:1386px;top:984px" width="18" height="18"><rect x="2" y="3" width="14" height="13" rx="2"/><path d="M6 1v4M12 1v4M6 9h6"/></svg>
<svg class="a" style="left:1418px;top:984px" width="18" height="18"><path d="M1 8h4v9H1zM6 8l4-7c2 0 2 3 1 6h5c1 0 1.500 1 1 2l-2 7c0 .5-.5 1-1 1H6z" fill="#4080ff"/></svg>

<!-- taskbar -->
<svg class="a" style="left:0;top:1010px" width="1680" height="40"><rect width="1680" height="40" fill="#b8862e"/><path d="M560 0h254l-6 40H560z" fill="url(#tg)"/><path d="M814 0h127l8 40H808z" fill="#a08040"/><path d="M941 0h739v40H949z" fill="#bca473"/><path d="M1640 0h40v22z" fill="#c9a64a"/></svg>
<svg class="a" style="left:10px;top:1015px" width="30" height="30"><path d="M2 6l11-1.500V14H2zM15 4.200L28 2v12H15zM2 16h11v9.500L2 24zM15 16h13v12l-13-2z" fill="#fff"/></svg>
<svg class="a" style="left:64px;top:1015px" width="34" height="31"><path d="M2 6h30v24H2z" fill="#eccb74"/><path d="M3 3h11l3 3H3z" fill="#eed58c"/><rect x="7" y="4" width="4" height="2" fill="#3a9a3a"/><rect x="13" y="5" width="4" height="2" fill="#d04030"/><rect x="21" y="6" width="4" height="2" fill="#3a80d0"/><path d="M5 10h26" stroke="#fff4c8"/><path d="M7 30V18h20v12h-5v-6H12v6z" fill="#6bb8e0"/><path d="M7 18h20v3H7z" fill="#bfe4f5"/></svg>
<div class="a" style="left:113px;top:1010px;width:52px;height:40px;background:#d2ae79;border:1.500px solid #f0e2c4"></div>
<div class="a" style="left:165px;top:1010px;width:4px;height:40px;background:#d2ae79;border-right:1px solid #f0e2c4"></div>
<div class="a" style="left:168px;top:1010px;width:5px;height:40px;background:#d2ae79;border-right:1.500px solid #f0e2c4"></div>
<svg class="a" style="left:122px;top:1012px" width="34" height="36"><circle cx="17" cy="19" r="11" fill="#5fbdec"/><path d="M7 18h19c0-6-4-9-9-9s-10 4-10 9z" fill="#fff" opacity=".25"/><path d="M10 18h16v4H10z" fill="#fff"/><path d="M12 13h10v4H12zM12 24c4 4 10 3 13-1l2 2c-4 6-12 6-16 2z" fill="#fff"/><path d="M3 28C0 22 18 4 29 3c4 0 4 5 2 9-1-4-2-6-5-6C18 6 6 20 6 28c0 3 3 5 6 4-4 2-7 0-9-4z" fill="#f3c419"/></svg>
<div class="a" style="left:175px;top:1010px;width:60px;height:40px;background:#c3995b;border:1px solid #a88446"></div>
<svg class="a" style="left:188px;top:1014px" width="36" height="32"><path d="M2 12h7L20 2v28L9 21H2z" fill="#d9694a" stroke="#2a1408" stroke-width="1"/><path d="M24 10c2 4 2 9 0 13M28 6c3 6 3 14 0 21" fill="none" stroke="#3a1a08" stroke-width="1.500"/></svg>
<svg class="a" style="left:1472px;top:1024px" width="92" height="18"><path d="M1 11l6-5 6 5z" fill="#fff"/><path d="M23 1v16M24 2h8l3 3 3-1v7h-9l-3-2h-2" fill="#fff" stroke="#333" stroke-width=".8"/><circle cx="34" cy="13" r="4.500" fill="#e02020"/><path d="M32 11l4 4M36 11l-4 4" stroke="#fff"/><rect x="48" y="3" width="15" height="11" fill="none" stroke="#fff" stroke-width="1.500"/><rect x="48.500" y="2" width="7" height="7" fill="#bca473" stroke="#fff"/><path d="M52 9v7h8" stroke="#fff" stroke-width="1.400" fill="none"/><path d="M72 6h4l5-4v14l-5-4h-4z" fill="#eee" stroke="#777" stroke-width=".6"/><path d="M84 5c2 3 2 6 0 9" stroke="#fff" fill="none"/></svg>
<div class="t" style="left:1575px;top:1022px;color:#fff">EST</div>
<div class="t" style="left:1615px;top:1014px;width:44px;text-align:center;color:#fff">15:37</div>
<div class="t" style="left:1609px;top:1032px;width:56px;text-align:center;color:#fff">11.08.2017</div>
</body></html>
